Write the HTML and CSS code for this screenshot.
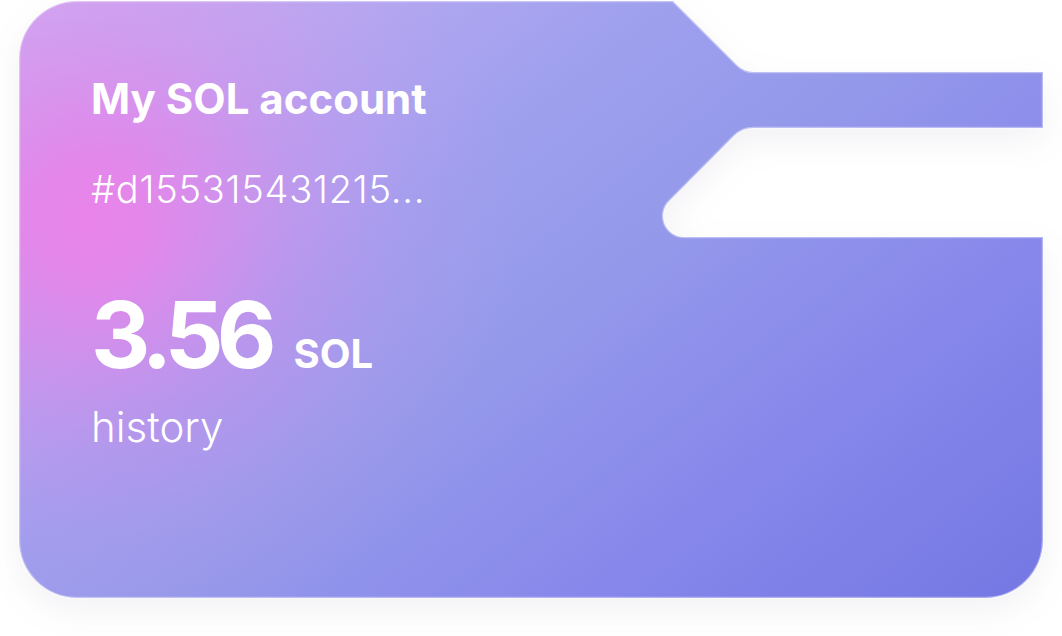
FILE: index.html
```html
<!DOCTYPE html>
<html lang="en">
<head>
<meta charset="utf-8">
<title>My SOL account</title>
<link rel="stylesheet" href="styles.css">
</head>
<body>
<div class="card">
  <svg class="card-bg" viewBox="0 0 1026 600" width="1026" height="600" aria-hidden="true">
    <defs>
      <linearGradient id="base" gradientUnits="userSpaceOnUse" x1="0" y1="0" x2="700" y2="900">
        <stop offset="0" stop-color="#cdb0f3"/>
        <stop offset="0.35" stop-color="#9ea0ee"/>
        <stop offset="0.5" stop-color="#9599ea"/>
        <stop offset="0.72" stop-color="#8787eb"/>
        <stop offset="0.93" stop-color="#777ae4"/>
        <stop offset="1" stop-color="#7275e3"/>
      </linearGradient>
      <radialGradient id="pink" gradientUnits="userSpaceOnUse" cx="72" cy="220" r="500">
        <stop offset="0" stop-color="#e983ea" stop-opacity="1"/>
        <stop offset="0.12" stop-color="#e983ea" stop-opacity="0.88"/>
        <stop offset="0.4" stop-color="#e287ea" stop-opacity="0.38"/>
        <stop offset="0.65" stop-color="#d890ec" stop-opacity="0.12"/>
        <stop offset="0.85" stop-color="#d890ec" stop-opacity="0"/>
      </radialGradient>
    </defs>
    <path d="M 1 59 A 58 58 0 0 1 59 1 L 655 1 L 719 65 Q 726 72 736 72 L 1025 72 L 1025 128 L 735 128 Q 724 128 716 136 L 651.15 201.15 A 21 21 0 0 0 666 237 L 1025 237 L 1025 540 A 58 58 0 0 1 967 598 L 59 598 A 58 58 0 0 1 1 540 Z" fill="url(#base)"/>
    <path d="M 1 59 A 58 58 0 0 1 59 1 L 655 1 L 719 65 Q 726 72 736 72 L 1025 72 L 1025 128 L 735 128 Q 724 128 716 136 L 651.15 201.15 A 21 21 0 0 0 666 237 L 1025 237 L 1025 540 A 58 58 0 0 1 967 598 L 59 598 A 58 58 0 0 1 1 540 Z" fill="url(#pink)" stroke="rgba(255,255,255,0.38)" stroke-width="2.5"/>
  </svg>
  <div class="card-body">
    <h2 class="title">My SOL account</h2>
    <p class="address">#d155315431215...</p>
    <div class="amount">
      <span class="value">3.56</span>
      <span class="unit">SOL</span>
    </div>
    <a class="history" href="#">history</a>
  </div>
</div>
</body>
</html>
```

FILE: styles.css
```css
* {
  box-sizing: border-box;
}

html, body {
  margin: 0;
  padding: 0;
  background: #ffffff;
  overflow: hidden;
}

body {
  width: 1062px;
  height: 636px;
  font-family: "Inter", "Lato", "Noto Sans", sans-serif;
  color: #ffffff;
}

.card {
  position: relative;
  width: 1026px;
  height: 600px;
  margin-left: 18px;
}

.card-bg {
  position: absolute;
  left: 0;
  top: 0;
  overflow: visible;
  filter: drop-shadow(0 12px 16px rgba(70, 70, 110, 0.07));
}

.card-body {
  position: relative;
  display: flex;
  flex-direction: column;
  align-items: flex-start;
  padding: 78px 0 0 73px;
}

.title {
  margin: 0;
  font-size: 42px;
  line-height: 42px;
  font-weight: 700;
  letter-spacing: 0;
}

.address {
  margin: 50px 0 0;
  font-size: 38px;
  line-height: 38px;
  font-weight: 300;
  letter-spacing: 0.02em;
}

.amount {
  display: flex;
  align-items: baseline;
  gap: 24px;
  margin-top: 81px;
}

.value {
  font-size: 92px;
  line-height: 92px;
  font-weight: 700;
  letter-spacing: -0.075em;
}

.unit {
  font-size: 40px;
  line-height: 40px;
  font-weight: 700;
}

.history {
  margin-top: 25px;
  font-size: 42px;
  line-height: 42px;
  font-weight: 300;
  color: #ffffff;
  text-decoration: none;
}
```
